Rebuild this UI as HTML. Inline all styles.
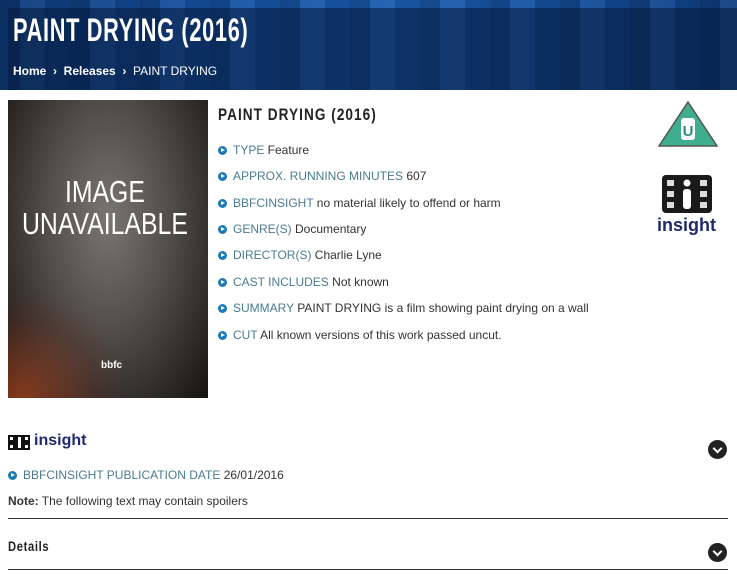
<!DOCTYPE html>
<html><head><meta charset="utf-8"><style>
*{margin:0;padding:0;box-sizing:border-box}
body{width:737px;height:579px;background:#fff;font-family:"Liberation Sans",sans-serif;position:relative;overflow:hidden;color:#333}
.hdr{position:absolute;left:0;top:0;width:737px;height:90px;background:linear-gradient(90deg,#0d3a78 0%,#1552a3 30%,#1a5cb0 55%,#134c98 80%,#0f3f82 100%)}
.hdr .band{position:absolute;left:0;top:0;width:737px;height:90px;background:repeating-linear-gradient(90deg,rgba(0,0,0,.18) 0 20px,rgba(255,255,255,.05) 20px 45px,rgba(0,0,0,.1) 45px 70px)}
.hdr .dark{position:absolute;left:8px;top:8px;width:729px;height:82px;background:rgba(5,25,60,.55)}
.cond{transform-origin:0 0;white-space:nowrap}
.title{position:absolute;left:13px;top:12px;color:#fff;font-size:32px;font-weight:bold;letter-spacing:1px;transform:scaleX(0.68)}
.bc{position:absolute;left:13px;top:64px;color:#fff;font-size:12px;font-weight:bold}
.bc span{font-weight:normal}
.poster{position:absolute;left:8px;top:100px;width:200px;height:298px;background:radial-gradient(ellipse at 50% 40%,#7a7570 0%,#504c49 45%,#262220 85%,#161210 100%);overflow:hidden}
.poster .t{position:absolute;top:76px;left:14px;color:#fff;font-size:31px;line-height:32px;text-align:center;transform:scaleX(0.8)}
.poster .fire{position:absolute;left:0;bottom:0;width:120px;height:110px;background:radial-gradient(ellipse at 10% 100%,rgba(200,80,30,.6),rgba(120,40,20,.2) 50%,transparent 70%)}
.poster .b{position:absolute;left:93px;top:260px;color:#fff;font-size:10px;font-weight:bold}
h2{position:absolute;left:218px;top:105px;font-size:17px;font-weight:bold;letter-spacing:1.3px;color:#222;transform:scaleX(0.8)}
.row{position:absolute;left:218px;font-size:12px;color:#333;white-space:nowrap}
.row i{display:inline-block;width:9px;height:9px;border-radius:50%;background:#1b79b5;margin-right:6px;vertical-align:-1px;position:relative}
.row i:after{content:"";position:absolute;left:3px;top:2px;border-left:4px solid #fff;border-top:2.5px solid transparent;border-bottom:2.5px solid transparent}
.row b{font-weight:normal;color:#4a7b90}
.hr{position:absolute;left:8px;width:720px;height:1px;background:#333}
.chev{position:absolute;left:708px;width:19px;height:19px;border-radius:50%;background:#222}
.chev:after{content:"";position:absolute;left:6px;top:5px;width:5px;height:5px;border-right:2px solid #fff;border-bottom:2px solid #fff;transform:rotate(45deg)}
.ins{color:#1e2a6e;font-weight:bold;font-size:17px}
</style></head><body>
<div class="hdr"><div class="band"></div><div class="dark"></div></div>
<div class="title cond">PAINT DRYING (2016)</div>
<div class="bc">Home &nbsp;›&nbsp; Releases &nbsp;›&nbsp; <span>PAINT DRYING</span></div>

<div class="poster"><div class="fire"></div><div class="t cond">IMAGE<br>UNAVAILABLE</div><div class="b">bbfc</div></div>

<h2 class="cond">PAINT DRYING (2016)</h2>
<div class="row" style="top:143px"><i></i><b>TYPE</b> Feature</div>
<div class="row" style="top:169px"><i></i><b>APPROX. RUNNING MINUTES</b> 607</div>
<div class="row" style="top:196px"><i></i><b>BBFCINSIGHT</b> no material likely to offend or harm</div>
<div class="row" style="top:222px"><i></i><b>GENRE(S)</b> Documentary</div>
<div class="row" style="top:248px"><i></i><b>DIRECTOR(S)</b> Charlie Lyne</div>
<div class="row" style="top:275px"><i></i><b>CAST INCLUDES</b> Not known</div>
<div class="row" style="top:301px"><i></i><b>SUMMARY</b> PAINT DRYING is a film showing paint drying on a wall</div>
<div class="row" style="top:328px"><i></i><b>CUT</b> All known versions of this work passed uncut.</div>

<svg style="position:absolute;left:657px;top:100px" width="62" height="48" viewBox="0 0 62 48">
<polygon points="31,2 60,46 2,46" fill="#3fae8c" stroke="#555" stroke-width="1.5"/>
<rect x="24" y="18" width="14" height="22" rx="3" fill="#fff"/>
<text x="31" y="36" font-family="Liberation Sans" font-weight="bold" font-size="15" fill="#2d8f70" text-anchor="middle">U</text>
</svg>
<svg style="position:absolute;left:662px;top:175px" width="50" height="38" viewBox="0 0 50 38">
<rect x="0" y="0" width="50" height="38" rx="4" fill="#1a1a1a"/>
<g fill="#ddd"><rect x="5" y="5" width="7" height="6"/><rect x="5" y="16" width="7" height="6"/><rect x="5" y="27" width="7" height="6"/>
<rect x="38" y="5" width="7" height="6"/><rect x="38" y="16" width="7" height="6"/><rect x="38" y="27" width="7" height="6"/>
<circle cx="25" cy="8" r="3.5" fill="#fff"/><rect x="21" y="14" width="8" height="20" rx="3" fill="#fff"/></g>
</svg>
<div class="ins" style="position:absolute;left:657px;top:215px;font-size:18px">insight</div>

<svg style="position:absolute;left:8px;top:435px" width="22" height="15" viewBox="0 0 22 15">
<rect width="22" height="15" fill="#111"/><g fill="#fff"><rect x="2" y="2" width="3" height="3"/><rect x="2" y="10" width="3" height="3"/><rect x="17" y="2" width="3" height="3"/><rect x="17" y="10" width="3" height="3"/><rect x="10" y="2" width="3" height="11"/></g>
</svg>
<div class="ins" style="position:absolute;left:34px;top:432px;font-size:16px">insight</div>
<div class="chev" style="top:440px"></div>
<div class="row" style="left:8px;top:468px"><i></i><b>BBFCINSIGHT PUBLICATION DATE</b> 26/01/2016</div>
<div style="position:absolute;left:8px;top:494px;font-size:12px;color:#333"><strong>Note:</strong> The following text may contain spoilers</div>
<div class="hr" style="top:518px"></div>
<div class="cond" style="position:absolute;left:8px;top:538px;font-weight:bold;font-size:14px;letter-spacing:0.8px;color:#222;transform:scaleX(0.8)">Details</div>
<div class="chev" style="top:543px"></div>
<div class="hr" style="top:569px"></div>
</body></html>
